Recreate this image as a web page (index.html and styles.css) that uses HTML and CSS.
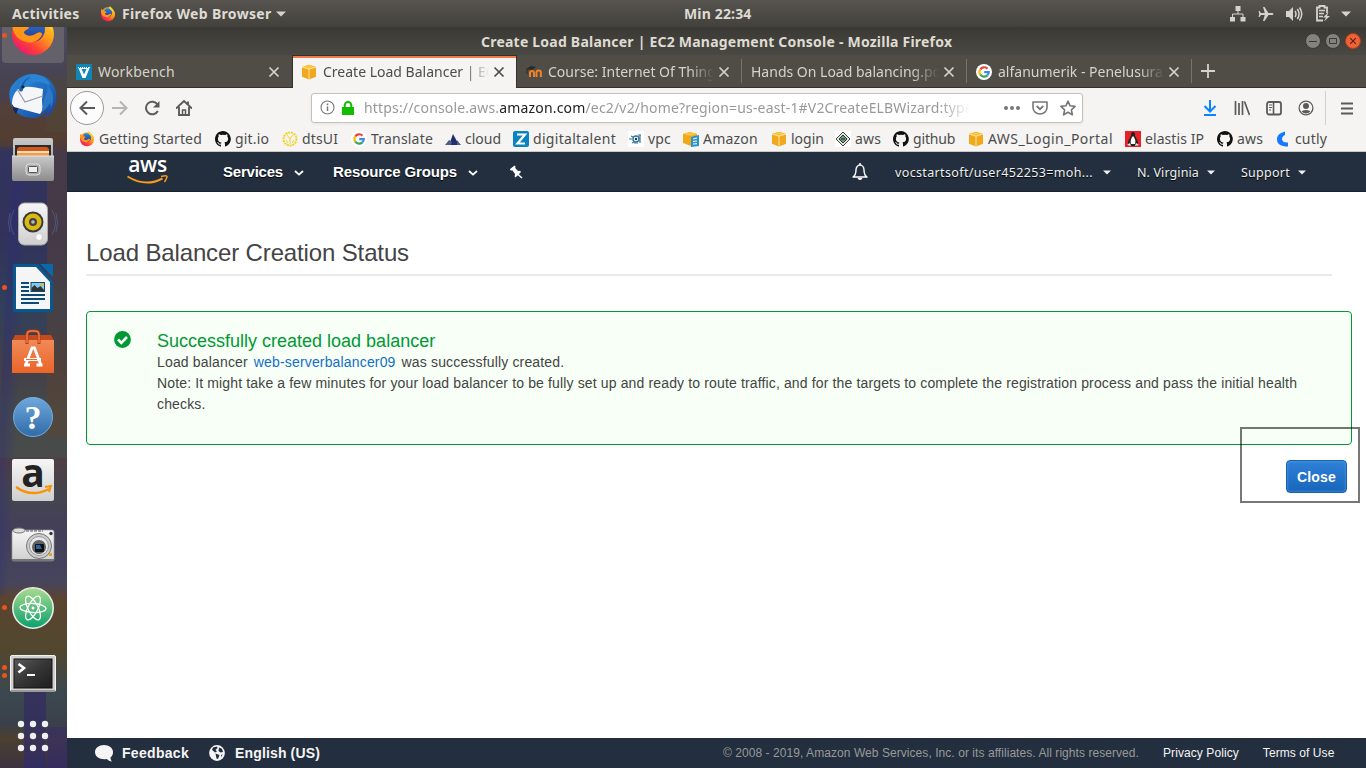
FILE: index.html
```html
<!DOCTYPE html>
<html lang="en">
<head>
<meta charset="utf-8">
<title>Create Load Balancer | EC2 Management Console</title>
<link rel="stylesheet" href="styles.css">
</head>
<body>
<svg class="sprite" aria-hidden="true">
  <defs>
    <linearGradient id="ffg" x1="1" y1="0" x2=".2" y2="1"><stop offset="0" stop-color="#ffe226"/><stop offset=".45" stop-color="#ff9a1a"/><stop offset=".75" stop-color="#ff3b3b"/><stop offset="1" stop-color="#e6127a"/></linearGradient>
    <linearGradient id="ffb" x1="0" y1="0" x2="0" y2="1"><stop offset="0" stop-color="#1c8fe8"/><stop offset="1" stop-color="#312a8c"/></linearGradient>
    <linearGradient id="tb" x1="0" y1="0" x2="1" y2="1"><stop offset="0" stop-color="#2b86d6"/><stop offset=".5" stop-color="#1f6fc4"/><stop offset="1" stop-color="#1b3f94"/></linearGradient>
    <linearGradient id="metal" x1="0" y1="0" x2="0" y2="1"><stop offset="0" stop-color="#c9c9c9"/><stop offset="1" stop-color="#8c8c8c"/></linearGradient>
    <linearGradient id="light" x1="0" y1="0" x2="0" y2="1"><stop offset="0" stop-color="#f6f6f6"/><stop offset="1" stop-color="#cfcfcf"/></linearGradient>
    <linearGradient id="bag" x1="0" y1="0" x2="0" y2="1"><stop offset="0" stop-color="#f08a58"/><stop offset="1" stop-color="#ea6428"/></linearGradient>
    <linearGradient id="hlp" x1="0" y1="0" x2="0" y2="1"><stop offset="0" stop-color="#6ea8dc"/><stop offset="1" stop-color="#2f6ba8"/></linearGradient>
    <linearGradient id="atm" x1="0" y1="0" x2="0" y2="1"><stop offset="0" stop-color="#a9dc8d"/><stop offset="1" stop-color="#0aa06e"/></linearGradient>
    <linearGradient id="trm" x1="0" y1="0" x2="1" y2="1"><stop offset="0" stop-color="#5a5a5a"/><stop offset=".5" stop-color="#353535"/><stop offset="1" stop-color="#1e1e1e"/></linearGradient>
    <symbol id="firefox" viewBox="0 0 48 48">
      <circle cx="24" cy="25" r="21" fill="url(#ffg)"/>
      <circle cx="23" cy="20" r="13" fill="url(#ffb)"/>
      <path d="M4 8c2 1 3 3 4 5 2-2 5-3 8-3-2 2-3 4-2 6 3 0 5 1 6 3-2 2-5 2-5 5 3 4 9 3 13 0 3-2 6 0 5 2-3 6-10 9-16 7C6 31 1 19 4 8z" fill="#ff9417"/>
      <path d="M28 1c7 3 11 8 12 14 2 1 3 5 3 8-2-5-6-9-10-11-4-3-6-6-5-11z" fill="#ffd52c"/>
    </symbol>
    <symbol id="github" viewBox="0 0 16 16"><path fill="#111" d="M8 0C3.6 0 0 3.6 0 8c0 3.5 2.300 6.500 5.500 7.600.400.100.500-.200.500-.400v-1.500c-2.200.500-2.700-.900-2.700-.900-.400-.900-.900-1.200-.900-1.200-.700-.500.100-.500.100-.500.800.100 1.200.800 1.200.800.700 1.200 1.900.900 2.300.700.100-.500.300-.900.500-1.100-1.800-.200-3.600-.900-3.600-4 0-.900.300-1.600.800-2.100-.100-.200-.400-1 .100-2.100 0 0 .700-.200 2.200.800a7.600 7.600 0 0 1 4 0c1.500-1 2.200-.800 2.200-.800.400 1.100.200 1.900.100 2.100.500.600.800 1.300.800 2.100 0 3.100-1.900 3.700-3.700 3.900.300.300.600.800.600 1.500v2.200c0 .200.100.500.600.400A8 8 0 0 0 8 0z"/></symbol>
    <symbol id="google" viewBox="0 0 16 16"><circle cx="8" cy="8" r="8" fill="#fff"/><g fill="none" stroke-width="2.200"><path d="M4.200 5.500A4.700 4.700 0 0 1 11.500 4.600" stroke="#ea4335"/><path d="M4.200 10.500a4.700 4.700 0 0 1 0-5" stroke="#fbbc05"/><path d="M11.300 11.400a4.700 4.700 0 0 1-7.100-.9" stroke="#34a853"/><path d="M8.200 8.100h4.600c0 1.300-.5 2.500-1.500 3.300" stroke="#4285f4"/></g></symbol>
    <symbol id="cube" viewBox="0 0 16 16"><path d="M1 3 8 .8 15 3v9.800L8 15.500 1 12.800z" fill="#f0a81c"/><path d="M1 3 8 .8 15 3 8 5.200z" fill="#fdc33c"/><path d="M1 3l7 2.200L15 3M8 5v10.500" stroke="#fff0c4" stroke-width=".8" fill="none"/></symbol>
    <symbol id="close" viewBox="0 0 12 12"><path d="M1.500 1.500l9 9M10.500 1.500l-9 9" stroke="currentColor" stroke-width="1.700"/></symbol>
    <symbol id="caret" viewBox="0 0 10 6"><path d="M0 .5h10L5 5.500z" fill="currentColor"/></symbol>
    <symbol id="chev" viewBox="0 0 10 6"><path d="M1 1l4 3.600L9 1" stroke="currentColor" stroke-width="1.800" fill="none"/></symbol>
  </defs>
</svg>

<header class="topbar">
  <span class="activities">Activities</span>
  <svg class="i16"><use href="#firefox"/></svg>
  <span class="appname">Firefox Web Browser</span>
  <svg class="caret-lg"><use href="#caret"/></svg>
  <span class="clock">Min 22:34</span>
  <div class="tray">
    <svg width="16" height="16" viewBox="0 0 16 16" fill="#d6d3cb"><path d="M5.500 0h5v5h-5zM0 11h5v4.500H0zM10.500 11h5v4.500h-5z"/><path d="M8 5v3M2.500 11V8h10.500v3" fill="none" stroke="#d6d3cb"/></svg>
    <svg width="16" height="16" viewBox="0 0 16 16" fill="#d6d3cb"><path d="M15.500 8c0-.7-1-1.100-2-1.100h-3L6.500 1H5l1.800 5.900H3L1.500 5H.5l.8 3-.8 3h1L3 9.100h3.800L5 15h1.500l4-5.900h3c1 0 2-.4 2-1.100z"/></svg>
    <svg width="17" height="16" viewBox="0 0 17 16"><path d="M0 5h3l4-4v14l-4-4H0z" fill="#d6d3cb"/><path d="M9 5q2 3 0 6M11.300 3q3.500 5 0 10M13.500 1.500q4.500 6.500 0 13" fill="none" stroke="#d6d3cb" stroke-width="1.500"/></svg>
    <svg width="16" height="17" viewBox="0 0 16 17"><path d="M12 8V2.500H9.500V1H4.500v1.500H2v13h6" fill="none" stroke="#d6d3cb" stroke-width="1.800"/><path d="M4 5.500h6M4 8.500h5M4 11.500h4" stroke="#d6d3cb" stroke-width="1.500"/><path d="M13.500 7 8 12.500h3L9 16.500l6-5.500h-3z" fill="#d6d3cb"/></svg>
    <svg class="caret-lg"><use href="#caret"/></svg>
  </div>
</header>

<div class="desktop">
<nav class="dock">
  <div class="slot slot-active"><i class="dot"></i><svg class="i48"><use href="#firefox"/></svg></div>
  <div class="slot mail"><svg class="i48" viewBox="0 0 48 48"><path d="M2 14C7 6 17-2 31 2c12 3 18 14 16 26-1 8-6 15-13 17 3-3 4-5 4-8-3 4-7 7-12 8C12 45 3 39 1 27 0 21 0 18 2 14z" fill="url(#tb)"/><path d="M3 27c0 7 1 10 4 14l3-7z" fill="#18245f"/><path d="M3 31c0-7 3-13 7-15 7-4 16-2 24 0l-1 11c0 6 2 9-2 14L5 34z" fill="#f4f6f8"/><path d="M8 16l8 13 18-6" fill="none" stroke="#99a" stroke-width="1.200"/><path d="M10 13C12 5 20-1 29 2c7 2 11 5 12 11-8-5-15-5-21-1-4 3-8 4-10 1z" fill="#2a84d4"/><path d="M10 17c2-6 8-15 12-12-6 1-7 6-8 12-1 2-3 2-4 0z" fill="#1b5fa8"/><circle cx="14" cy="14" r="1.500" fill="#123"/><path d="M35 25c3-5 4-8 3-13 7 6 8 16 3 24 1-3 1-5 0-6-2 4-5 7-8 9z" fill="#2b78c4"/></svg></div>
  <div class="slot"><svg class="i48" viewBox="0 0 48 48"><path d="M4 4q0-2 2-2h36q2 0 2 2v41H4z" fill="url(#metal)"/><path d="M6 9h36v11H6z" fill="#2c2c2c"/><path d="M8 13l2-2h28l2 2v7H8z" fill="#d2591c"/><path d="M8 15h32v5H8z" fill="#f39a4c"/><path d="M8 16h32" stroke="#fff3df" stroke-width="1.500"/><path d="M3 20h42v23q0 2-2 2H5q-2 0-2-2z" fill="url(#metal)"/><path d="M3 20h42" stroke="#e3e3e3"/><rect x="17" y="28" width="14" height="11" rx="3" fill="#aaa" stroke="#e0e0e0"/><rect x="19.500" y="30.500" width="9" height="6" rx="1" fill="#eee" stroke="#555"/></svg></div>
  <div class="slot"><svg class="i48" viewBox="0 0 48 48"><path d="M5 10q-7 12 0 25M43 10q7 12 0 25M1 13q-3 9 0 19M47 13q3 9 0 19" stroke="#5a7fb5" fill="none" opacity=".45"/><rect x="9.500" y="3" width="29" height="42" rx="6" fill="url(#light)" stroke="#aaa"/><circle cx="24" cy="22" r="10.500" fill="#3a3a3a"/><circle cx="24" cy="22" r="8.500" fill="#d9b912"/><circle cx="24" cy="22" r="4" fill="#444"/><circle cx="24" cy="22" r="1.800" fill="#bbb"/><circle cx="30" cy="37" r="3.500" fill="#fff" stroke="#ccc"/></svg></div>
  <div class="slot"><i class="dot"></i><svg class="i48" viewBox="0 0 48 48"><path d="M4 2q0-2 2-2h23l15 17v29q0 2-2 2H6q-2 0-2-2z" fill="#0a568f"/><path d="M7 3h20l14 15v27H7z" fill="#f5f5f5"/><path d="M31 0h13v13z" fill="#0869ac"/><path d="M27 3l14 15z" fill="#ddd"/><path d="M12 19h8M12 23h8M12 27h8M12 31h24M12 35h24M12 39h18" stroke="#0c4b76" stroke-width="1.800"/><rect x="22" y="18.500" width="13.500" height="9" fill="#83c7ed" stroke="#0c4b76"/><path d="M22.500 27v-3l3-3 3 3 3-2 3.500 4v1z" fill="#333"/><circle cx="33" cy="20.500" r="1.500" fill="#e5b82e"/></svg></div>
  <div class="slot"><svg class="i48" viewBox="0 0 48 48"><path d="M3 13l3-6h36l3 6z" fill="#c44c1c"/><path d="M3 12h42v33H3z" fill="url(#bag)"/><path d="M18 16V7q0-4 4-4h4q4 0 4 4v9" fill="none" stroke="#b53c12" stroke-width="3"/><path d="M18 15V7q0-4 4-4h4q4 0 4 4v8" fill="none" stroke="#f07a46" stroke-width="1.500"/><path d="M17 36l6-16h2.500L31.500 36M15 31.500h17M15 37h6M27.500 37h6" fill="none" stroke="#fff" stroke-width="2.800"/><path d="M17 31.500h11" stroke="#ec6d32" stroke-width="1"/></svg></div>
  <div class="slot"><svg class="i48" viewBox="0 0 48 48"><circle cx="24" cy="25" r="19.500" fill="url(#hlp)" stroke="#77ace0"/><text x="24" y="37" class="q-mark">?</text></svg></div>
  <div class="slot"><svg class="i48" viewBox="0 0 48 48"><rect x="3" y="3" width="42" height="42" rx="2" fill="url(#light)"/><text x="24" y="30.500" class="a-mark">a</text><path d="M7 31q15 11 33 2" fill="none" stroke="#f79400" stroke-width="2.500"/><path d="M36 31l6-1-2 6" fill="none" stroke="#f79400" stroke-width="2"/></svg></div>
  <div class="slot camera"><svg class="i48" viewBox="0 0 48 48"><rect x="3" y="8" width="42" height="31" rx="2" fill="url(#light)" stroke="#999" stroke-width=".7"/><path d="M3 37h42v2H3z" fill="#777"/><ellipse cx="10" cy="8.500" rx="6" ry="2.500" fill="#ddd" stroke="#777"/><path d="M17 9h17" stroke="#555" stroke-dasharray="3 1"/><circle cx="30" cy="24" r="12.500" fill="#ccc" stroke="#777"/><circle cx="30" cy="24" r="9.500" fill="#e8e8e8" stroke="#999"/><circle cx="30" cy="25" r="7" fill="#606060"/><rect x="26" y="22" width="9" height="8" rx="1" fill="#111"/><path d="M27 23h4l2 4h-6z" fill="#2863a8"/><circle cx="42" cy="11.500" r="1.700" fill="#333"/><rect x="40" y="31" width="3" height="3" fill="#eba321"/></svg></div>
  <div class="slot"><i class="dot"></i><svg class="i48" viewBox="0 0 48 48"><circle cx="24" cy="24" r="20.200" fill="url(#atm)" stroke="#e8ece8" stroke-width="1.600"/><g fill="none" stroke="#fff" stroke-width="1.300"><ellipse cx="24" cy="24" rx="13" ry="4.500" transform="rotate(3 24 24)"/><ellipse cx="24" cy="24" rx="13" ry="5" transform="rotate(63 24 24)"/><ellipse cx="24" cy="24" rx="13" ry="5" transform="rotate(117 24 24)"/></g><circle cx="24" cy="24" r="1.500" fill="#fff"/></svg></div>
  <div class="slot"><i class="dot two"></i><svg class="i48" viewBox="0 0 48 48"><rect x="1.500" y="7.500" width="45" height="36" rx="1.500" fill="#d0cfcd" stroke="#f2f2f2"/><path d="M2 42h44v2H2z" fill="#999"/><rect x="5" y="11" width="38" height="29" fill="url(#trm)" stroke="#111"/><path d="M9.500 16l5.500 4-5.500 4.500" fill="none" stroke="#fff" stroke-width="2.600"/><path d="M18 27h8" stroke="#fff" stroke-width="2"/></svg></div>
  <div class="slot"><svg class="i48" viewBox="0 0 48 48" fill="#f0eff0"><circle cx="12" cy="12" r="3.200"/><circle cx="24" cy="12" r="3.200"/><circle cx="36" cy="12" r="3.200"/><circle cx="12" cy="24" r="3.200"/><circle cx="24" cy="24" r="3.200"/><circle cx="36" cy="24" r="3.200"/><circle cx="12" cy="36" r="3.200"/><circle cx="24" cy="36" r="3.200"/><circle cx="36" cy="36" r="3.200"/></svg></div>
</nav>

<section class="window">
  <div class="titlebar">
    <h1 class="wtitle">Create Load Balancer | EC2 Management Console - Mozilla Firefox</h1>
    <div class="wbuttons">
      <svg width="16" height="16" viewBox="0 0 16 16"><circle cx="8" cy="8" r="7.500" fill="#84827c" stroke="#3a3934"/><path d="M4 8.500h8" stroke="#3a3934"/></svg>
      <svg width="16" height="16" viewBox="0 0 16 16"><circle cx="8" cy="8" r="7.500" fill="#84827c" stroke="#3a3934"/><path d="M4.500 5.500h7v5h-7z" fill="none" stroke="#3a3934"/></svg>
      <svg width="16" height="16" viewBox="0 0 16 16"><circle cx="8" cy="8" r="7.500" fill="#ef6237" stroke="#b53d17"/><path d="M5.200 5.200l5.600 5.600M10.800 5.200l-5.600 5.600" stroke="#5a2412" stroke-width="1.200"/></svg>
    </div>
  </div>
  <div class="tabs">
    <div class="tab first"><svg class="i16" viewBox="0 0 16 16"><path d="M0 0h16v16H0z" fill="#0f86b6"/><path d="M2 3h12l-4.500 11h-3z" fill="#fff"/><path d="M5.500 5h5L8 10.500z" fill="#0f86b6"/><path d="M3 3.500h10" stroke="#0f86b6" stroke-dasharray="1 1"/></svg><span class="label">Workbench</span><svg class="x"><use href="#close"/></svg></div>
    <div class="tab active"><svg class="i16"><use href="#cube"/></svg><span class="label">Create Load Balancer | EC2</span><svg class="x"><use href="#close"/></svg></div>
    <div class="tab"><svg class="i16" viewBox="0 0 16 16"><path d="M4 13V9q0-2 2-2t2 2v4M10.500 13V8.500q0-2 2.200-2t2.200 2V13" fill="none" stroke="#f08228" stroke-width="2"/><path d="M0 5l5-3 5 1-4 3z" fill="#2b2a28"/><path d="M1 5v5" stroke="#2b2a28"/></svg><span class="label">Course: Internet Of Things</span><svg class="x"><use href="#close"/></svg></div>
    <div class="tab noicon"><span class="label">Hands On Load balancing.pdf</span><svg class="x"><use href="#close"/></svg></div>
    <div class="tab"><svg class="i16"><use href="#google"/></svg><span class="label">alfanumerik - Penelusuran</span><svg class="x"><use href="#close"/></svg></div>
    <div class="newtab"><svg width="16" height="16" viewBox="0 0 16 16"><path d="M8 1v14M1 8h14" stroke="#d6d3cb" stroke-width="1.800"/></svg></div>
  </div>
  <div class="toolbar">
    <div class="back"><svg width="16" height="16" viewBox="0 0 16 16"><path d="M16 8H1.500M8 1.500 1.500 8 8 14.500" fill="none" stroke="#5a5a58" stroke-width="2"/></svg></div>
    <div class="navicons">
      <svg width="16" height="16" viewBox="0 0 16 16"><path d="M0 8h14.500M8 1.500 14.500 8 8 14.500" fill="none" stroke="#b6b5b3" stroke-width="2"/></svg>
      <svg width="16" height="16" viewBox="0 0 16 16"><path d="M13.500 4.500A6.300 6.300 0 1 0 13.800 11" fill="none" stroke="#5a5a58" stroke-width="2"/><path d="M15.500 1v6.500H9z" fill="#5a5a58"/></svg>
      <svg width="16" height="16" viewBox="0 0 16 16"><path d="M0 8.500 8 1l8 7.500M3 7v8h10V7M12 4V1.500" fill="none" stroke="#5a5a58" stroke-width="1.900"/><path d="M6.500 15v-5h3v5" fill="none" stroke="#5a5a58" stroke-width="1.500"/></svg>
    </div>
    <div class="urlbar">
      <svg width="15" height="15" viewBox="0 0 15 15"><circle cx="7.500" cy="7.500" r="6.500" fill="none" stroke="#777" stroke-width="1.100"/><path d="M7.500 6.500V11M7.500 3.500v1.700" stroke="#777" stroke-width="1.500"/></svg>
      <svg width="12" height="14" viewBox="0 0 12 14"><path d="M0 6h12v8H0z" fill="#12bc00"/><path d="M2.700 7V4.300a3.300 3.300 0 0 1 6.600 0V7" fill="none" stroke="#12bc00" stroke-width="2"/></svg>
      <span class="url">https://console.aws.<b>amazon.com</b>/ec2/v2/home?region=us-east-1#V2CreateELBWizard:type</span>
      <svg class="dots" width="16" height="16" viewBox="0 0 16 16" fill="#777"><circle cx="2" cy="8" r="2"/><circle cx="8" cy="8" r="2"/><circle cx="14" cy="8" r="2"/></svg>
      <svg class="pocket" width="16" height="16" viewBox="0 0 16 16"><path d="M1 2h14v5.500a7 6.500 0 0 1-14 0z" fill="none" stroke="#777" stroke-width="1.600" stroke-linejoin="round"/><path d="M4.700 6 8 9.200 11.300 6" fill="none" stroke="#777" stroke-width="1.800"/></svg>
      <svg width="16" height="16" viewBox="0 0 16 16"><path d="M8 1.200l2.100 4.600 5 .6-3.700 3.400 1 5L8 12.300l-4.400 2.500 1-5L.9 6.400l5-.6z" fill="none" stroke="#777" stroke-width="1.600" stroke-linejoin="round"/></svg>
    </div>
    <div class="actions">
      <svg width="16" height="16" viewBox="0 0 16 16"><path d="M8 0v11M2.500 6 8 11.500 13.500 6M2 15h12" fill="none" stroke="#0a84ff" stroke-width="2"/></svg>
      <svg width="16" height="16" viewBox="0 0 16 16"><path d="M1.500 1v14M5 3v12M8.500 1v14M10.500 1.500 15.500 15" fill="none" stroke="#5a5a58" stroke-width="1.700"/></svg>
      <svg width="16" height="16" viewBox="0 0 16 16"><rect x="1" y="2" width="14" height="12.500" rx="2" fill="none" stroke="#5a5a58" stroke-width="1.800"/><path d="M7.500 2v12" stroke="#5a5a58" stroke-width="1.600"/><path d="M3 5h3M3 7.500h3M3 10h2" stroke="#5a5a58"/></svg>
      <svg width="16" height="16" viewBox="0 0 16 16"><circle cx="8" cy="8" r="6.900" fill="none" stroke="#5a5a58" stroke-width="1.300"/><circle cx="8" cy="6" r="3" fill="#5a5a58"/><path d="M3.500 11.500q1-1.500 4.500-1.500t4.500 1.500q-2 2-4.500 2t-4.500-2z" fill="#5a5a58"/></svg>
    </div>
    <div class="menu"><svg width="12" height="13" viewBox="0 0 12 13"><path d="M0 1.500h12M0 6.500h12M0 11.500h12" stroke="#5a5a58" stroke-width="2"/></svg></div>
  </div>
  <div class="bookmarks">
    <a><svg class="i16"><use href="#firefox"/></svg>Getting Started</a>
    <a><svg class="i16"><use href="#github"/></svg>git.io</a>
    <a><svg class="i16" viewBox="0 0 16 16"><circle cx="8" cy="8" r="6.500" fill="none" stroke="#f3d32b" stroke-width="2" stroke-dasharray="2 .8"/><path d="M5 4l3 4 3-4M8 8v5M4 9l2 3M12 9l-2 3" stroke="#f3d32b" fill="none"/></svg>dtsUI</a>
    <a><svg class="i16"><use href="#google"/></svg>Translate</a>
    <a><svg class="i16" viewBox="0 0 16 16"><path d="M8 3l6 11H4z" fill="#202e6b"/><path d="M0 14l4-5 3 2-1 3zM12 9l4 5h-4z" fill="#525b87"/></svg>cloud</a>
    <a><svg class="i16" viewBox="0 0 16 16"><rect width="16" height="16" rx="2" fill="#0a84c1"/><path d="M4 3.500h8L4.500 12.500H12" fill="none" stroke="#fff" stroke-width="2.200"/></svg>digitaltalent</a>
    <a><svg class="i16" viewBox="0 0 16 16"><path d="M0 0h16v16H0z" fill="#fff"/><circle cx="8" cy="8" r="3" fill="none" stroke="#39789c" stroke-width="1.500"/><circle cx="8" cy="8" r="1.200" fill="#234"/><path d="M1 8h3M12 4v8M3 5l2 1M4 12l2-1M6 12h4M13 4h-3" stroke="#39789c" stroke-width="1.200"/></svg>vpc</a>
    <a><svg class="i16" viewBox="0 0 16 16"><path d="M0 3l7-2 7 2v9l-6 3-8-3z" fill="#f0a81c"/><path d="M0 3l7 2 7-2-7-2z" fill="#fdc33c"/><path d="M8 6l8-2v11l-8 1z" fill="#2b95c9"/><path d="M10 8l4-1M10 10.500l4-.5M10 13l4-.300" stroke="#fff"/></svg>Amazon</a>
    <a><svg class="i16"><use href="#cube"/></svg>login</a>
    <a><svg class="i16" viewBox="0 0 16 16"><path d="M0 0h16v16H0z" fill="#fff"/><path d="M8 1l7 7-7 7-7-7z" fill="#dde5df" stroke="#444"/><path d="M8 4l4 4-4 4-4-4z" fill="#6e9b7d" stroke="#333"/><path d="M6 8h4" stroke="#222"/></svg>aws</a>
    <a><svg class="i16"><use href="#github"/></svg>github</a>
    <a><svg class="i16"><use href="#cube"/></svg>AWS_Login_Portal</a>
    <a><svg class="i16" viewBox="0 0 16 16"><path d="M0 0h16v16H0z" fill="#e8202a"/><path d="M8 1c2 0 2 2 2 4 1 2 3 4 3 7l-2 3H5l-2-3c0-3 2-5 3-7 0-2 0-4 2-4z" fill="#222"/><path d="M8 5c2 2 3 5 2 8H6c-1-3 0-6 2-8z" fill="#fff"/><path d="M2 14l3-2 1 3zM14 14l-3-2-1 3z" fill="#eee"/></svg>elastis IP</a>
    <a><svg class="i16"><use href="#github"/></svg>aws</a>
    <a class="cutly"><svg class="i16" viewBox="0 0 16 16"><path d="M9 .5C3 2 1 5 1 8.500 1 13 5 15.500 12 15.500v-4C8 12 6 10 6 8c0-2 1-3 3-4z" fill="#1677ff"/></svg>cutly</a>
  </div>

  <div class="page">
    <header class="awsnav">
      <div class="logo"><span>aws</span><svg width="41" height="10" viewBox="0 0 41 10"><path d="M.5 1.500q18 11 35 2" fill="none" stroke="#f79a1c" stroke-width="2"/><path d="M34 1.500q6-1.500 6 0T37.500 7" fill="none" stroke="#f79a1c" stroke-width="1.500"/></svg></div>
      <div class="navlink services"><span>Services</span><svg class="chev"><use href="#chev"/></svg></div>
      <div class="navlink"><span>Resource Groups</span><svg class="chev"><use href="#chev"/></svg></div>
      <svg class="pin" width="14" height="14" viewBox="0 0 14 14" fill="#fff"><path d="M.8 4.200 5.500.5l1 1-.3 1.500 2.800 3 2-.2 1 1.200-5.500 5.500-1-1.200.7-2L3.500 5.500 1.800 5.600z"/><path d="M8.500 9l4.500 4" stroke="#fff" stroke-width="1.500"/></svg>
      <svg class="bell" width="16" height="18" viewBox="0 0 16 18"><path d="M1 14c3-2 3-4 3-7 0-3 2-5 4-5s4 2 4 5c0 3 0 5 3 7z" fill="none" stroke="#fff" stroke-width="1.400" stroke-linejoin="round"/><path d="M8 0v2" stroke="#fff" stroke-width="1.500"/><path d="M5.500 15h5q-.5 2-2.500 2t-2.500-2z" fill="#fff"/></svg>
      <div class="acct user"><span>vocstartsoft/user452253=moh...</span><svg class="tri"><use href="#caret"/></svg></div>
      <div class="acct region"><span>N. Virginia</span><svg class="tri"><use href="#caret"/></svg></div>
      <div class="acct support"><span>Support</span><svg class="tri"><use href="#caret"/></svg></div>
    </header>
    <main class="content">
      <h2>Load Balancer Creation Status</h2>
      <div class="alert">
        <svg width="17" height="17" viewBox="0 0 17 17"><circle cx="8.500" cy="8.500" r="8.400" fill="#093"/><path d="M4 8.500l3.300 3.300L13 6" fill="none" stroke="#fff" stroke-width="2.600"/></svg>
        <div>
          <h3>Successfully created load balancer</h3>
          <p>Load balancer<a>web-serverbalancer09</a>was successfully created.</p>
          <p class="note">Note: It might take a few minutes for your load balancer to be fully set up and ready to route traffic, and for the targets to complete the registration process and pass the initial health checks.</p>
        </div>
      </div>
      <div class="buttons"><button class="close-btn">Close</button><div class="marker"></div></div>
    </main>
    <footer class="awsfoot">
      <svg width="18" height="17" viewBox="0 0 18 17"><path d="M9 0c5 0 9 3 9 7 0 3-1 4-2.500 5.500 0 1.500.5 3 1.500 4-2 0-4-1-5-2.500C5 15 0 12 0 7c0-4 4-7 9-7z" fill="#f5f5f5"/></svg>
      <b class="fb">Feedback</b>
      <svg width="16" height="16" viewBox="0 0 16 16"><circle cx="8" cy="8" r="7.900" fill="#f5f5f5"/><path d="M4 2.500l4-1 .5 1.500L6.500 5l1.500 1.500-2 1L4.500 6 3 5zM10 2.500l3 1.200L14 7l-2.500.5L9.500 6zM6.500 8.500l4 1.500-1.500 4-1.500-.5zM12 10l1.500-.5-1 2.500z" fill="#232f3e"/></svg>
      <b class="lang">English (US)</b>
      <span class="copy">© 2008 - 2019, Amazon Web Services, Inc. or its affiliates. All rights reserved.</span>
      <span class="pp">Privacy Policy</span>
      <span class="tou">Terms of Use</span>
    </footer>
  </div>
</section>
</div>
</body>
</html>
```
FILE: styles.css
```css
* { box-sizing: border-box; }
body { margin: 0; width: 1366px; height: 768px; overflow: hidden; font: 14px/1 "Noto Sans", sans-serif; background: #fff; display: flex; flex-direction: column; }
span, b, a { white-space: nowrap; }
svg { flex: none; display: block; }
.sprite { position: absolute; width: 0; height: 0; }
.i16 { width: 16px; height: 16px; }
.i48 { width: 48px; height: 48px; overflow: visible; }

/* Desktop panel */
.topbar { flex: none; height: 27px; display: flex; align-items: center; padding: 0 15px 0 12px; background: linear-gradient(#575450, #42413c); color: #dfdbd2; font-weight: 700; font-size: 14px; line-height: 20px; position: relative; z-index: 1; }
.activities { width: 88px; letter-spacing: .25px; }
.appname { width: 149px; margin: 0 5px 0 6px; letter-spacing: .33px; }
.caret-lg { width: 10px; height: 6px; color: #d6d3cb; }
.clock { margin-left: 398px; width: 66px; letter-spacing: .15px; }
.tray { margin-left: auto; display: flex; align-items: center; gap: 12px; }
.tray .caret-lg { margin-left: -2px; }

/* Launcher */
.desktop { flex: 1; display: flex; min-height: 0; }
.dock {
  width: 67px; flex: none;
  background:
    linear-gradient(93deg, transparent 0 11px, #2c2a7a55 13px 18px, transparent 30px) 0 150px / 67px 420px no-repeat,
    linear-gradient(#4e493880, #4e493880) 47px 50px / 20px 55px no-repeat,
    linear-gradient(#5a402c80, #5a402c80) 0 75px / 67px 45px no-repeat,
    linear-gradient(#63422a66, #63422a66) 47px 120px / 20px 290px no-repeat,
    linear-gradient(#33245e99, #2b2a7499) 24px 650px / 22px 91px no-repeat,
    linear-gradient(#2e277a80, #2e277a80) 47px 700px / 20px 41px no-repeat,
    linear-gradient(#4a4a5c 0, #474252 8%, #4e3b36 15%, #33345d 17%, #31325a 28%, #32405a 38%, #433f48 46%, #454a4a 52%, #484b4a 58%, #7a3b3040 58.300%, #45454e 63%, #433f5a 68%, #46455c 75%, #5a4430 77%, #52472e 84%, #3b4850 90%, #3a4049 94%, #4b4030 96%, #3c3240 100%), #404048;
}
.slot { height: 64px; display: flex; align-items: center; justify-content: center; position: relative; padding-right: 1px; }
.slot-active { height: 37px; overflow: hidden; align-items: flex-start; }
.slot-active::before { content: ""; position: absolute; left: 2px; right: 3px; top: 0; height: 36px; background: #64616b; border-radius: 0 0 4px 4px; }
.slot-active .i48 { margin-top: -18px; position: relative; }
.slot-active .dot { top: 6px; z-index: 1; }
.mail { padding-top: 2px; }
.camera { padding-top: 3px; }
.dot { position: absolute; left: 2px; top: 29px; width: 5px; height: 5px; border-radius: 50%; background: #e95420; }
.dot.two { top: 25px; box-shadow: 0 8px #e95420; }
.q-mark { font: 700 34px "Liberation Serif", serif; fill: #fff; text-anchor: middle; }
.a-mark { font: 700 39px "Open Sans", sans-serif; fill: #222; text-anchor: middle; }

/* Browser window */
.window { flex: 1; display: flex; flex-direction: column; min-width: 0; }
.titlebar { flex: none; height: 28px; display: flex; align-items: center; background: linear-gradient(#3a3935, #4a4842); padding: 0 5px 0 414px; }
.wtitle { margin: 1px 0 0; font-size: 14px; line-height: 20px; letter-spacing: .22px; color: #dfdbd2; flex: 1; }
.wbuttons { display: flex; gap: 4px; }
.tabs { flex: none; height: 33px; display: flex; background: #504d46; border-bottom: 1px solid #33312c; }
.tab { flex: none; width: 225px; height: 33px; padding: 0 12px 0 9px; display: flex; align-items: center; color: #d6d3cb; position: relative; }
.tab .label { flex: 1; min-width: 0; margin: 0 4px 0 6px; overflow: hidden; line-height: 20px; -webkit-mask-image: linear-gradient(90deg, #000 85%, transparent); mask-image: linear-gradient(90deg, #000 85%, transparent); }
.tab.first .label { -webkit-mask-image: none; mask-image: none; letter-spacing: .2px; }
.tab.noicon .label { margin-left: 0; }
.tab .x { width: 12px; height: 12px; }
.tab.active { background: #f5f4f2; color: #4c4c4c; border: solid #33312c; border-width: 1px 1px 0; padding: 0 11px 1px 8px; }
.tab.active::before { content: ""; position: absolute; left: 0; right: 0; top: 0; height: 2px; background: #f07746; }
.tab.noicon::before, .tab.noicon::after, .tab.noicon + .tab::after { content: ""; position: absolute; width: 1px; top: 4px; height: 24px; background: #77746c; left: -1px; }
.tab.noicon::after, .tab.noicon + .tab::after { left: auto; right: 0; }
.newtab { padding: 8px; }

.toolbar { flex: none; height: 39px; background: #f5f4f2; display: flex; align-items: center; }
.back { flex: none; width: 34px; height: 34px; border-radius: 50%; border: 1px solid #9a9996; background: #fcfcfc; margin-left: 3px; display: grid; place-items: center; }
.navicons { display: flex; gap: 16px; margin-left: 8px; }
.urlbar { flex: none; margin-left: 119px; width: 772px; height: 30px; border: 1px solid #c3c1bd; border-radius: 3px; background: #fff; box-shadow: 0 1px 3px #0001; display: flex; align-items: center; padding: 0 6px 0 8px; gap: 7px; }
.url { width: 606px; margin-left: 3px; overflow: hidden; line-height: 20px; letter-spacing: .17px; color: #999; -webkit-mask-image: linear-gradient(90deg, #000 95%, transparent); mask-image: linear-gradient(90deg, #000 95%, transparent); }
.url b { font-weight: 400; color: #222; }
.dots { margin-left: auto; }
.pocket { margin: 0 5px; }
.actions { display: flex; gap: 16px; margin-left: 119px; }
.menu { border-left: 1px solid #d4d2cf; height: 34px; margin-left: 11px; padding: 11px 0 0 15px; }

.bookmarks { flex: none; height: 25px; background: #f5f4f2; border-bottom: 1px solid #cbc9c6; display: grid; grid-template-columns: 136px 67px 69px 94px 68px 115px 55px 88px 64px 58px 75px 157px 92px 59px 60px; padding-left: 12px; color: #4c4c4c; letter-spacing: .15px; line-height: 20px; }
.bookmarks a { display: flex; align-items: center; gap: 4px; }
.bookmarks a:nth-child(4), .bookmarks a:nth-child(8) { letter-spacing: .2px; }
.bookmarks a:nth-child(5), .bookmarks a:nth-child(9) { letter-spacing: 0; }
.bookmarks a:nth-child(6) { letter-spacing: .3px; }
.bookmarks a:nth-child(11) { letter-spacing: -.15px; }
.bookmarks a:nth-child(12) { letter-spacing: .47px; }
.bookmarks a:nth-child(13) { letter-spacing: .07px; }
.bookmarks .cutly { gap: 3px; }

/* AWS console */
.page { flex: 1; display: flex; flex-direction: column; min-height: 0; }
.awsnav { flex: none; height: 40px; background: #232f3e; color: #fff; display: flex; align-items: center; border-bottom: 1px solid #17202c; }
.logo { width: 41px; margin-left: 60px; font: 600 21px/20px "Open Sans", sans-serif; text-align: center; }
.logo span { display: block; height: 17px; line-height: 12px; letter-spacing: -.3px; }
.navlink { display: flex; align-items: center; font: 700 15px/20px "Liberation Sans", Arial, sans-serif; letter-spacing: -.125px; text-shadow: 0 1px 1px #000; }
.services { margin: 0 29px 0 55px; letter-spacing: -.217px; }
.chev { width: 10px; height: 6px; margin: 3px 0 0 11px; }
.pin { margin-left: 31px; }
.bell { margin-left: 329px; }
.acct { display: flex; align-items: center; font-size: 12.5px; line-height: 20px; text-shadow: 0 1px 1px #000; color: #f0f0f0; margin-top: 2px; }
.user { margin-left: 27px; margin-right: 26px; letter-spacing: .362px; }
.region { margin-right: 26px; letter-spacing: .114px; }
.support { letter-spacing: .257px; }
.tri { width: 8px; height: 5px; margin-left: 10px; }
.region .tri, .support .tri { margin-left: 8px; }

.content { flex: 1; padding: 46px 14px 0 19px; font-family: "Liberation Sans", Arial, sans-serif; color: #444; min-height: 0; }
.content h2 { margin: 0 20px 35px 0; font-size: 24px; font-weight: 400; line-height: 30px; height: 38px; letter-spacing: -.134px; border-bottom: 2px solid #eaeaea; }
.alert { height: 134px; border: 1px solid #093; border-radius: 4px; background: #f7fff7; padding: 18px 28px; display: flex; gap: 25px; }
.alert svg { margin: 1px 1px 0 -1px; }
.alert h3 { margin: 0; font-size: 18px; font-weight: 400; line-height: 22px; color: #093; }
.alert p { margin: 0; font-size: 14px; line-height: 21px; letter-spacing: .16px; }
.alert .note { letter-spacing: .142px; }
.alert a { color: #146ec4; margin: 0 6px; }
.buttons { position: relative; display: flex; justify-content: flex-end; padding: 15px 5px 0; }
.close-btn { width: 61px; height: 33px; border: 1px solid #1462b0; border-radius: 4px; background: linear-gradient(#2f80d8, #1766bb); color: #fff; font: 700 14px/20px "Liberation Sans", Arial, sans-serif; letter-spacing: .175px; padding: 0; box-shadow: inset 0 0 3px #5a9fe4; }
.marker { position: absolute; right: -8px; top: -18px; width: 120px; height: 76px; border: 2px solid #0008; }

.awsfoot { flex: none; height: 30px; background: #232f3e; color: #f5f5f5; display: flex; align-items: center; padding-left: 28px; font: 12px/20px "Liberation Sans", Arial, sans-serif; }
.awsfoot b { font-size: 14px; margin-left: 9px; }
.awsfoot .fb { margin-right: 20px; letter-spacing: .3px; }
.awsfoot .lang { margin-left: 10px; letter-spacing: .147px; }
.copy { color: #999; margin-left: 403px; letter-spacing: .059px; }
.pp, .tou { margin-left: 24px; letter-spacing: .08px; }
```
